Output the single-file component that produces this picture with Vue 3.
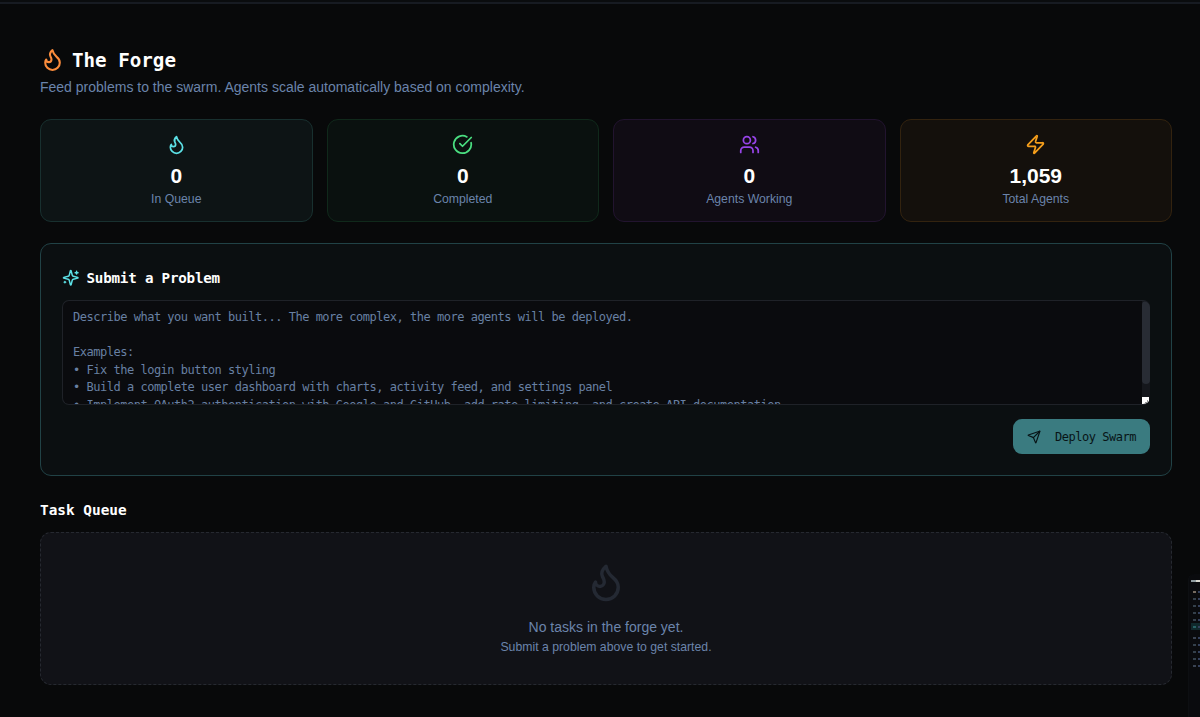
<script setup>
const flame = ['M8.5 14.5A2.5 2.5 0 0 0 11 12c0-1.38-.5-2-1-3-1.072-2.143-.224-4.054 2-6 .5 2.5 2 4.9 4 6.5 2 1.6 3 3.5 3 5.5a7 7 0 1 1-14 0c0-1.153.433-2.294 1-3a2.5 2.5 0 0 0 2.5 2.5z']
const stats = [
  { tone: 'cyan', value: '0', label: 'In Queue', icon: flame },
  { tone: 'green', value: '0', label: 'Completed', icon: ['M21.801 10A10 10 0 1 1 17 3.335', 'm9 11 3 3L22 4'] },
  { tone: 'purple', value: '0', label: 'Agents Working', icon: ['M16 21v-2a4 4 0 0 0-4-4H6a4 4 0 0 0-4 4v2', 'M13 7a4 4 0 1 1-8 0a4 4 0 1 1 8 0', 'M22 21v-2a4 4 0 0 0-3-3.87', 'M16 3.13a4 4 0 0 1 0 7.75'] },
  { tone: 'amber', value: '1,059', label: 'Total Agents', icon: ['M4 14a1 1 0 0 1-.78-1.63l9.9-10.2a.5.5 0 0 1 .86.46l-1.92 6.02A1 1 0 0 0 13 10h7a1 1 0 0 1 .78 1.63l-9.9 10.2a.5.5 0 0 1-.86-.46l1.92-6.02A1 1 0 0 0 11 14z'] },
]
const hint = `Describe what you want built... The more complex, the more agents will be deployed.

Examples:
• Fix the login button styling
• Build a complete user dashboard with charts, activity feed, and settings panel
• Implement OAuth2 authentication with Google and GitHub, add rate limiting, and create API documentation`
const rows = ['head', 'warm', 'item', 'item', 'item', 'item', 'active', 'label', 'item', 'item', 'item', 'label']
</script>

<template>
  <main class="page">
    <div class="topline"></div>
    <header>
      <h1>
        <svg class="icon title-icon" viewBox="0 0 24 24"><path v-for="d in flame" :key="d" :d="d" /></svg>
        <span>The Forge</span>
      </h1>
      <p class="subtitle">Feed problems to the swarm. Agents scale automatically based on complexity.</p>
    </header>

    <section class="stats">
      <article v-for="s in stats" :key="s.label" class="stat" :class="s.tone">
        <svg class="icon" viewBox="0 0 24 24"><path v-for="d in s.icon" :key="d" :d="d" /></svg>
        <strong>{{ s.value }}</strong>
        <span>{{ s.label }}</span>
      </article>
    </section>

    <section class="submit">
      <h2>
        <svg class="icon spark" viewBox="0 0 24 24">
          <path d="M9.937 15.5A2 2 0 0 0 8.5 14.063l-6.135-1.582a.5.5 0 0 1 0-.962L8.5 9.936A2 2 0 0 0 9.937 8.5l1.582-6.135a.5.5 0 0 1 .963 0L14.063 8.5A2 2 0 0 0 15.5 9.937l6.135 1.581a.5.5 0 0 1 0 .964L15.5 14.063a2 2 0 0 0-1.437 1.437l-1.582 6.135a.5.5 0 0 1-.963 0z" />
          <path d="M20 3v4M22 5h-4M4 17v2M5 18H3" />
        </svg>
        <span>Submit a Problem</span>
      </h2>
      <div class="field">
        <div class="hint">{{ hint }}</div>
        <div class="track"><div class="thumb"></div><div class="grip"><svg viewBox="0 0 7 7"><path d="M5.5 3v2.500H3" /></svg></div></div>
      </div>
      <button>
        <svg class="icon" viewBox="0 0 24 24">
          <path d="M14.536 21.686a.5.5 0 0 0 .937-.024l6.5-19a.496.496 0 0 0-.635-.635l-19 6.5a.5.5 0 0 0-.024.937l7.93 3.18a2 2 0 0 1 1.112 1.11z" />
          <path d="m21.854 2.147-10.94 10.939" />
        </svg>
        <span>Deploy Swarm</span>
      </button>
    </section>

    <h3>Task Queue</h3>
    <section class="empty">
      <svg class="icon" viewBox="0 0 24 24"><path v-for="d in flame" :key="d" :d="d" /></svg>
      <p>No tasks in the forge yet.</p>
      <small>Submit a problem above to get started.</small>
    </section>

    <aside class="minimap">
      <div v-for="(r, i) in rows" :key="i" class="mini" :class="r"><i></i><b></b></div>
    </aside>
  </main>
</template>

<style>
html, body { margin: 0; background: #08090a; }
</style>

<style scoped>
* { box-sizing: border-box; }
.page {
  position: relative; width: 1200px; height: 717px; overflow: hidden;
  padding: 0 28px 0 40px; background: #08090a; color: #fff;
  font-family: "Liberation Sans", Arial, sans-serif;
}
.topline { height: 4px; margin: 0 -28px 0 -40px; background: #0a0c0e; border-bottom: 2px solid #171b22; }
.icon { display: block; flex: none; fill: none; stroke: currentColor; stroke-width: 2; stroke-linecap: round; stroke-linejoin: round; }
h1, h2, h3, p { margin: 0; }
h1, h2, h3, button, .hint { font-family: "DejaVu Sans Mono", monospace; }
header { padding-top: 42px; height: 115px; }
h1 { display: flex; align-items: center; gap: 7px; height: 28px; font-size: 19.2px; line-height: 28px; }
h1 span, h2 span { padding-top: 2px; }
.title-icon { width: 25px; height: 25px; margin-bottom: 1px; color: #fb8c3c; }
.subtitle { height: 20px; margin-top: 3px; font-size: 14px; line-height: 20px; color: #6b84ab; white-space: nowrap; }
.stats { display: grid; grid-template-columns: repeat(4, 1fr); gap: 14px; height: 103px; }
.stat { display: flex; flex-direction: column; align-items: center; padding-top: 14px; border: 1px solid; border-radius: 11px; }
.stat .icon { width: 21px; height: 21px; }
.stat strong { margin-top: 7px; font-size: 21px; line-height: 28px; }
.stat span { font-size: 12.25px; line-height: 18px; color: #6b84ab; }
.cyan { background: #0d1415; border-color: #18302f; }
.cyan .icon { color: #5ce1e6; }
.green { background: #0a110f; border-color: #10291b; }
.green .icon { color: #4ade80; }
.purple { background: #100c14; border-color: #22142f; }
.purple .icon { color: #9744e8; }
.amber { background: #14100c; border-color: #33230f; }
.amber .icon { color: #f59e1b; }
.submit {
  display: flex; flex-direction: column; height: 233px; margin-top: 21px; padding: 21px;
  border: 1px solid #214246; border-radius: 11px; background: #0b0f11;
}
h2 { display: flex; align-items: center; gap: 7px; height: 25px; font-size: 14.2px; line-height: 25px; letter-spacing: -0.2px; }
.spark { width: 17.5px; height: 17.5px; color: #5ce1e6; }
.field { display: flex; height: 105px; margin-top: 10px; overflow: hidden; border: 1px solid #1f2228; border-right: 0; border-radius: 7px; background: #0a0b0e; }
.hint { flex: 1; padding: 8px 10px 0; font-size: 12px; line-height: 17.5px; letter-spacing: -0.485px; color: #6880a3; white-space: pre; overflow: hidden; }
.track { display: flex; flex-direction: column; justify-content: space-between; width: 8px; background: #15171c; }
.thumb { height: 83px; border-radius: 4px; background: #282c34; }
.grip { width: 7px; height: 7px; background: #fff; }
.grip svg { display: block; width: 7px; height: 7px; fill: none; stroke: #999; }
button {
  display: flex; align-items: center; align-self: flex-end; gap: 14px; width: 137px; height: 35px;
  margin: 14px 0 0; padding: 0 14px; border: 0; border-radius: 9px;
  background: #3a7b80; color: #081416; font-size: 12px; letter-spacing: -0.485px; white-space: nowrap;
}
button .icon { width: 14px; height: 14px; }
h3 { height: 25px; margin-top: 22px; font-size: 14.4px; line-height: 25px; }
.empty {
  display: flex; flex-direction: column; align-items: center; height: 153px; margin-top: 9px; padding-top: 28px;
  border: 1px dashed #262930; border-radius: 11px; background: #111217; color: #6b84ab;
}
.empty .icon { width: 42px; height: 42px; color: #242933; }
.empty p { margin-top: 14px; font-size: 14px; line-height: 20px; }
.empty small { margin-top: 1px; font-size: 12.25px; line-height: 19px; }
.minimap {
  position: absolute; left: 1188px; top: 574px; width: 12px; height: 143px; padding: 4px 0 0 2px;
  border-left: 1px solid #0d0f12; border-radius: 6px 0 0; background: #0a0b0e; overflow: hidden;
}
.mini { display: flex; align-items: center; gap: 2px; height: 7px; padding-left: 2px; }
.mini i { width: 4px; height: 2px; background: #34404b; }
.mini b { width: 2px; height: 2px; background: #34405c; }
.head { height: 5px; margin-bottom: 5px; padding-left: 0; gap: 0; }
.head i { width: 5px; background: #8f9ca0; }
.head b { width: 5px; background: #d8d8d0; }
.warm i { background: #756b60; }
.active { background: #10292c; margin-bottom: 4px; }
.active i { background: #276264; }
.label i { background: #3a4352; }
</style>
